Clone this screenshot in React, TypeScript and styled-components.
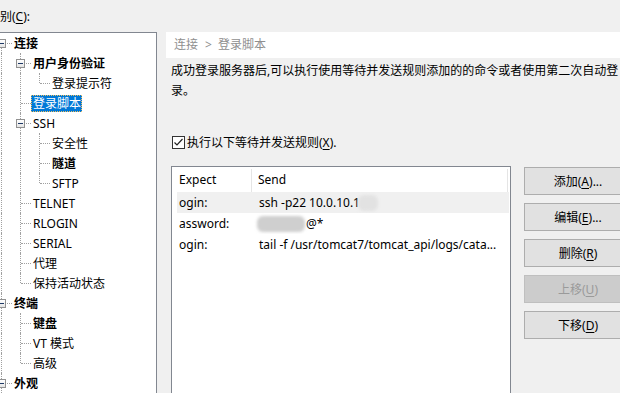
import React from "react";
import styled, { createGlobalStyle } from "styled-components";

type TreeItem = {
  label: string;
  level: number;
  bold?: boolean;
  expander?: boolean;
  selected?: boolean;
  hasNext: boolean;
};

// tree as shown: level, whether a later sibling follows (drives the dotted lines)
const treeItems: TreeItem[] = [
  { label: "连接", level: 0, bold: true, expander: true, hasNext: true },
  { label: "用户身份验证", level: 1, bold: true, expander: true, hasNext: true },
  { label: "登录提示符", level: 2, hasNext: false },
  { label: "登录脚本", level: 1, selected: true, hasNext: true },
  { label: "SSH", level: 1, expander: true, hasNext: true },
  { label: "安全性", level: 2, hasNext: true },
  { label: "隧道", level: 2, bold: true, hasNext: true },
  { label: "SFTP", level: 2, hasNext: false },
  { label: "TELNET", level: 1, hasNext: true },
  { label: "RLOGIN", level: 1, hasNext: true },
  { label: "SERIAL", level: 1, hasNext: true },
  { label: "代理", level: 1, hasNext: true },
  { label: "保持活动状态", level: 1, hasNext: false },
  { label: "终端", level: 0, bold: true, expander: true, hasNext: true },
  { label: "键盘", level: 1, bold: true, hasNext: true },
  { label: "VT 模式", level: 1, hasNext: true },
  { label: "高级", level: 1, hasNext: false },
  { label: "外观", level: 0, bold: true, expander: true, hasNext: true },
];

type Guide = { up: boolean; down: boolean; stub: boolean };

const buildGuides = (items: TreeItem[]): Guide[][] => {
  const open: boolean[] = [];
  return items.map((item, i) => {
    const guides: Guide[] = [];
    for (let k = 0; k < item.level; k++) {
      guides.push({ up: open[k], down: open[k], stub: false });
    }
    guides.push({ up: i > 0, down: item.hasNext, stub: true });
    open[item.level] = item.hasNext;
    return guides;
  });
};

const buttons = [
  { text: "添加", key: "A", more: true },
  { text: "编辑", key: "E", more: true },
  { text: "删除", key: "R" },
  { text: "上移", key: "U", disabled: true },
  { text: "下移", key: "D" },
];

const App = () => {
  const guides = buildGuides(treeItems);
  return (
    <>
      <GlobalStyle />
      <Window>
        <CategoryLabel>
          别(<u>C</u>):
        </CategoryLabel>
        <Body>
          <TreePanel>
            {treeItems.map((item, i) => (
              <TreeRow key={item.label}>
                {guides[i].map((g, k) => (
                  <GuideCell key={k} $up={g.up} $down={g.down} $stub={g.stub}>
                    {g.stub && item.expander && (
                      <Expander>
                        <Minus />
                      </Expander>
                    )}
                  </GuideCell>
                ))}
                <TreeLabel $bold={item.bold} $selected={item.selected}>
                  {item.label}
                </TreeLabel>
              </TreeRow>
            ))}
          </TreePanel>

          <RightPanel>
            <Breadcrumb>
              连接<Crumb>&gt;</Crumb>登录脚本
            </Breadcrumb>
            <Description>
              成功登录服务器后,可以执行使用等待并发送规则添加的的命令或者使用第二次自动登录。
            </Description>
            <CheckRow>
              <CheckBox>
                <svg width="11" height="11" viewBox="0 0 11 11">
                  <polyline points="1.5,5.5 4,8 9.5,2" fill="none" stroke="#222" strokeWidth="1.2" />
                </svg>
              </CheckBox>
              <span>
                执行以下等待并发送规则(<u>X</u>).
              </span>
            </CheckRow>

            <ListArea>
              <ListBox>
                <HeaderRow>
                  <HeadCell $first>Expect</HeadCell>
                  <HeadCell>Send</HeadCell>
                </HeaderRow>
                <DataRow $hover>
                  <ExpectCell>ogin:</ExpectCell>
                  <SendCell>
                    ssh -p22 10.0.10.1<Redacted $w={20} $tone="#e2e2e2" />
                  </SendCell>
                </DataRow>
                <DataRow>
                  <ExpectCell>assword:</ExpectCell>
                  <SendCell>
                    <Redacted $w={48} $tone="#cfcfcf" />@*
                  </SendCell>
                </DataRow>
                <DataRow>
                  <ExpectCell>ogin:</ExpectCell>
                  <SendCell>tail -f /usr/tomcat7/tomcat_api/logs/cata...</SendCell>
                </DataRow>
              </ListBox>

              <ButtonColumn>
                {buttons.map((b) => (
                  <ActionButton key={b.key} disabled={b.disabled}>
                    {b.text}(<u>{b.key}</u>){b.more ? "..." : ""}
                  </ActionButton>
                ))}
              </ButtonColumn>
            </ListArea>
          </RightPanel>
        </Body>
      </Window>
    </>
  );
};

const GlobalStyle = createGlobalStyle`
  html, body {
    margin: 0;
    padding: 0;
    background: #f0f0f0;
    overflow: hidden;
  }
  body {
    font-family: "Noto Sans", "Noto Sans CJK SC", sans-serif;
    font-size: 12px;
    color: #000;
  }
  u {
    text-underline-offset: 2px;
  }
`;

const Window = styled.div`
  width: 620px;
  height: 393px;
  overflow: hidden;
  background: #f0f0f0;
`;

const CategoryLabel = styled.div`
  height: 32px;
  box-sizing: border-box;
  padding-top: 7px;
  line-height: 20px;
  white-space: nowrap;
`;

const Body = styled.div`
  display: flex;
  align-items: flex-start;
`;

const TreePanel = styled.div`
  flex: none;
  margin-left: -8px;
  width: 165px;
  height: 380px;
  box-sizing: border-box;
  border: 1px solid #828790;
  background: #fff;
  overflow: hidden;
`;

const TreeRow = styled.div`
  display: flex;
  height: 20px;
`;

const GuideCell = styled.div<{ $up: boolean; $down: boolean; $stub: boolean }>`
  flex: none;
  width: 19px;
  position: relative;

  &::before {
    content: "";
    display: ${(p) => (p.$up || p.$down ? "block" : "none")};
    position: absolute;
    left: 8px;
    top: ${(p) => (p.$up ? "0" : "10px")};
    bottom: ${(p) => (p.$down ? "0" : "10px")};
    border-left: 1px dotted #a0a0a0;
  }

  &::after {
    content: "";
    display: ${(p) => (p.$stub ? "block" : "none")};
    position: absolute;
    left: 9px;
    right: 0;
    top: 10px;
    border-top: 1px dotted #a0a0a0;
  }
`;

const Expander = styled.span`
  position: absolute;
  z-index: 1;
  left: 4px;
  top: 6px;
  width: 9px;
  height: 9px;
  box-sizing: border-box;
  border: 1px solid #919191;
  background: linear-gradient(#ffffff, #e4e4e4);
  display: flex;
  align-items: center;
  justify-content: center;
`;

const Minus = styled.span`
  width: 5px;
  height: 1px;
  background: #1e3966;
`;

const TreeLabel = styled.span<{ $bold?: boolean; $selected?: boolean }>`
  align-self: center;
  height: 17px;
  line-height: 17px;
  padding: 0 1px 0 2px;
  white-space: nowrap;
  box-sizing: border-box;
  font-weight: ${(p) => (p.$bold ? 700 : 400)};
  color: ${(p) => (p.$selected ? "#fff" : "#000")};
  background: ${(p) => (p.$selected ? "#0078d7" : "transparent")};
  outline: ${(p) => (p.$selected ? "1px dotted #f0c060" : "none")};
  outline-offset: -1px;
`;

const RightPanel = styled.div`
  flex: none;
  margin-left: 9px;
  width: 480px;
`;

const Breadcrumb = styled.div`
  height: 26px;
  line-height: 26px;
  padding-left: 8px;
  background: #fff;
  color: #8f8f8f;
`;

const Crumb = styled.span`
  margin: 0 6px 0 7px;
`;

const Description = styled.div`
  margin: 3px 0 0 5px;
  width: 454px;
  line-height: 20px;
`;

const CheckRow = styled.label`
  display: flex;
  align-items: center;
  gap: 2px;
  height: 20px;
  margin: 31px 0 0 6px;
`;

const CheckBox = styled.span`
  width: 13px;
  height: 13px;
  box-sizing: border-box;
  border: 1px solid #333;
  background: #fff;
  display: flex;
  align-items: center;
  justify-content: center;
`;

const ListArea = styled.div`
  display: flex;
  gap: 13px;
  margin: 14px 0 0 5px;
`;

const ListBox = styled.div`
  flex: none;
  width: 340px;
  height: 240px;
  box-sizing: border-box;
  border: 1px solid #828790;
  background: #fff;
  padding: 0 1px 0 5px;
`;

const HeaderRow = styled.div`
  display: flex;
  height: 25px;
`;

const HeadCell = styled.div<{ $first?: boolean }>`
  width: ${(p) => (p.$first ? "75px" : "256px")};
  padding-left: ${(p) => (p.$first ? "2px" : "6px")};
  box-sizing: border-box;
  border-right: 1px solid #e5e5e5;
  margin-top: 2px;
  line-height: 22px;
`;

const DataRow = styled.div<{ $hover?: boolean }>`
  display: flex;
  height: 21px;
  line-height: 21px;
  background: ${(p) => (p.$hover ? "#f0f0f0" : "transparent")};
  white-space: nowrap;
`;

const ExpectCell = styled.div`
  width: 76px;
  padding-left: 2px;
  box-sizing: border-box;
`;

const SendCell = styled.div`
  width: 256px;
  padding-left: 6px;
  box-sizing: border-box;
  overflow: hidden;
  display: flex;
  align-items: center;
`;

const Redacted = styled.span<{ $w: number; $tone: string }>`
  display: inline-block;
  width: ${(p) => p.$w}px;
  height: 16px;
  border-radius: 6px;
  background: ${(p) => p.$tone};
  filter: blur(1.5px);
  margin: 0 1px 0 -2px;
`;

const ButtonColumn = styled.div`
  display: flex;
  flex-direction: column;
  gap: 8px;
  padding-top: 1px;
`;

const ActionButton = styled.button`
  width: 108px;
  height: 28px;
  box-sizing: border-box;
  border: 1px solid #adadad;
  background: #e1e1e1;
  font-family: inherit;
  font-size: 12px;
  color: #000;
  padding: 0;

  &:disabled {
    background: #cccccc;
    border-color: #bfbfbf;
    color: #9a9a9a;
  }
`;

export default App;
